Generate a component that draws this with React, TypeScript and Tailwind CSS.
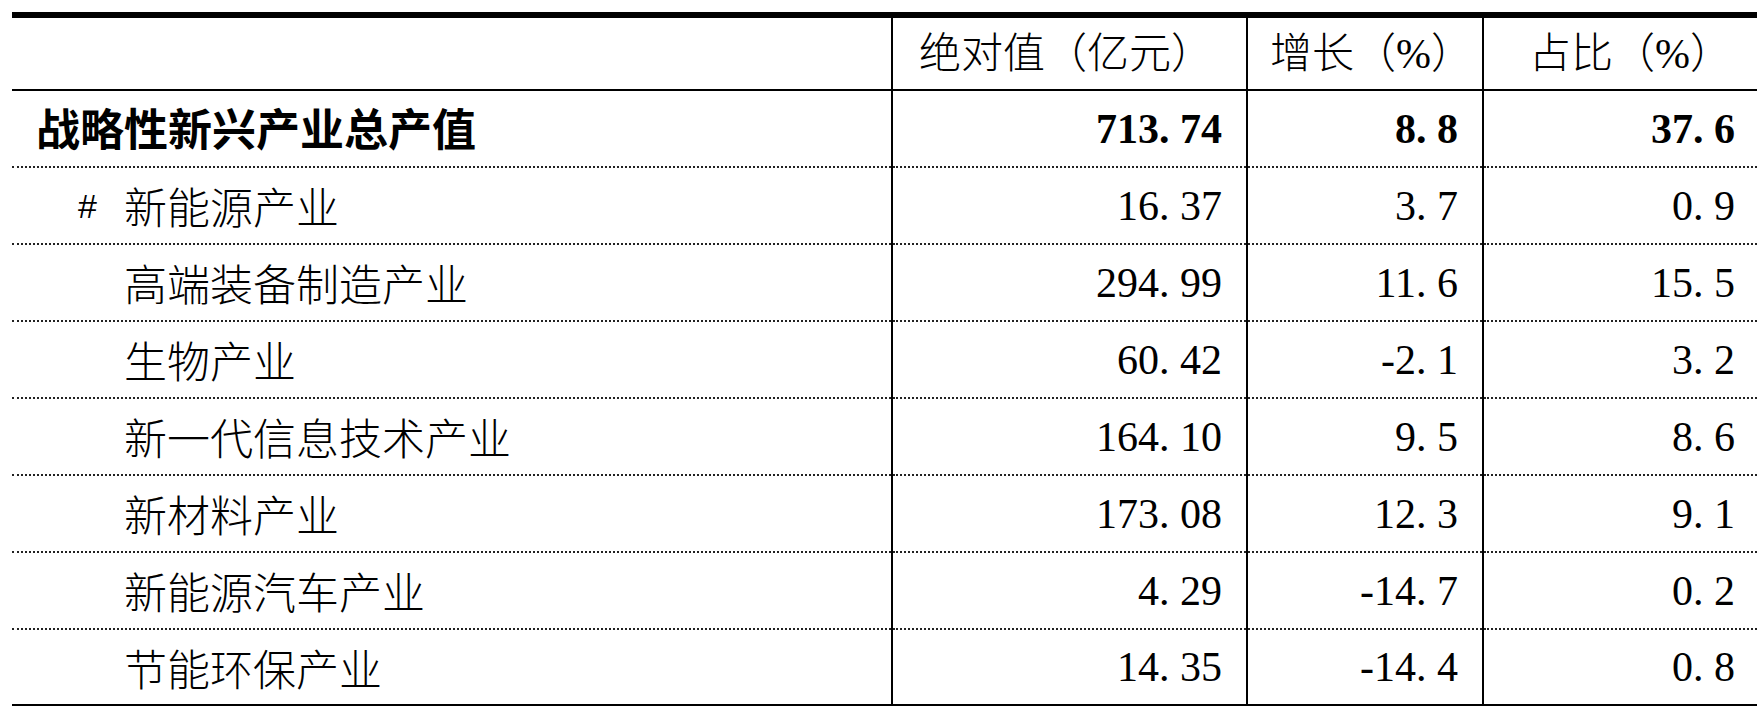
const rows = [
  { label: "战略性新兴产业总产值", value: "713.74", growth: "8.8", share: "37.6", total: true },
  { label: "新能源产业", value: "16.37", growth: "3.7", share: "0.9", mark: "#" },
  { label: "高端装备制造产业", value: "294.99", growth: "11.6", share: "15.5" },
  { label: "生物产业", value: "60.42", growth: "-2.1", share: "3.2" },
  { label: "新一代信息技术产业", value: "164.10", growth: "9.5", share: "8.6" },
  { label: "新材料产业", value: "173.08", growth: "12.3", share: "9.1" },
  { label: "新能源汽车产业", value: "4.29", growth: "-14.7", share: "0.2" },
  { label: "节能环保产业", value: "14.35", growth: "-14.4", share: "0.8" },
];

// SimSun-style numbers: the point takes a half-width cell like a digit
const Num = ({ v }: { v: string }) => {
  const [a, b] = v.split(".");
  return (
    <span className="whitespace-nowrap">
      {a}
      <span className="inline-block w-[21px] text-left">.</span>
      {b}
    </span>
  );
};

const App = () => {
  return (
    <div className="min-h-[706px] bg-white pl-[12px] pt-[12px] font-['Liberation_Serif','Noto_Sans_CJK_SC',serif] text-black">
      <table className="w-[1745px] table-fixed border-collapse border-t-[6px] border-b-4 border-black">
        <colgroup>
          <col className="w-[880px]" />
          <col className="w-[355px]" />
          <col className="w-[236px]" />
          <col className="w-[274px]" />
        </colgroup>
        <thead>
          <tr className="h-[75px] border-b-2 border-solid border-black text-[42px] leading-none">
            <th className="p-0"></th>
            <th className="border-l-2 border-black pl-[26px] text-left font-light">绝对值（亿元）</th>
            <th className="border-l-2 border-black pl-[22px] text-left font-light">增长（%）</th>
            <th className="border-l-2 border-black pl-[45px] text-left font-light">占比（%）</th>
          </tr>
        </thead>
        <tbody>
          {rows.map((r, i) => (
            <tr
              key={r.label}
              className={`h-[77px] text-[42px] leading-none ${
                i < rows.length - 1 ? "border-b-2 border-dotted border-[#222]" : ""
              }`}
            >
              <td className="p-0">
                {r.total ? (
                  <span className="pl-[24px] font-['Noto_Sans_CJK_SC',sans-serif] text-[44px] font-bold">
                    {r.label}
                  </span>
                ) : (
                  <div className="flex items-center">
                    <span className="w-[112px] pl-[66px] font-['Liberation_Sans',sans-serif] text-[34px]">
                      {r.mark ?? ""}
                    </span>
                    <span className="font-['Noto_Sans_CJK_SC',sans-serif] text-[43px] font-light">{r.label}</span>
                  </div>
                )}
              </td>
              <td className={`border-l-2 border-solid border-black pr-[24px] text-right ${r.total ? "font-bold" : ""}`}>
                <Num v={r.value} />
              </td>
              <td className={`border-l-2 border-solid border-black pr-[24px] text-right ${r.total ? "font-bold" : ""}`}>
                <Num v={r.growth} />
              </td>
              <td className={`border-l-2 border-solid border-black pr-[22px] text-right ${r.total ? "font-bold" : ""}`}>
                <Num v={r.share} />
              </td>
            </tr>
          ))}
        </tbody>
      </table>
    </div>
  );
};

export default App;
